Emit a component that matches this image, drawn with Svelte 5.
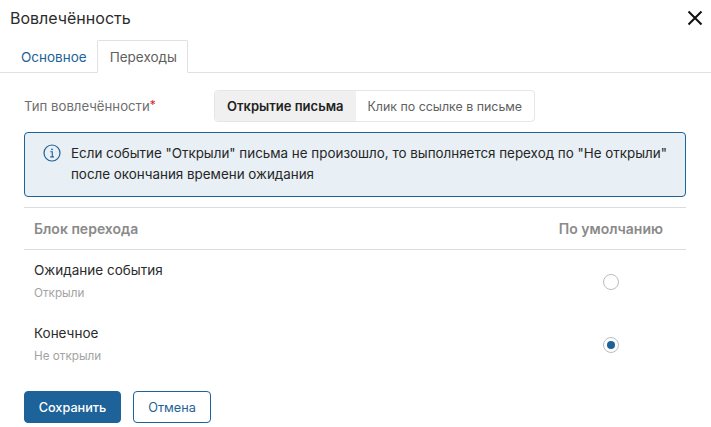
<script>
  const rows = [
    { title: "Ожидание события", sub: "Открыли", checked: false },
    { title: "Конечное", sub: "Не открыли", checked: true },
  ];
</script>

<div class="modal">
  <header>
    <h1>Вовлечённость</h1>
    <button class="close" aria-label="Закрыть">
      <svg width="16" height="16" viewBox="0 0 16 16"><path d="M1.5 1.5l13 13M14.5 1.5l-13 13" stroke="#111" stroke-width="2" fill="none" /></svg>
    </button>
  </header>

  <nav class="tabs">
    <span class="tab">Основное</span>
    <span class="tab active">Переходы</span>
  </nav>

  <div class="body">
    <div class="field">
      <span class="label">Тип вовлечённости<i>*</i></span>
      <div class="segment">
        <span class="seg on">Открытие письма</span>
        <span class="seg">Клик по ссылке в письме</span>
      </div>
    </div>

    <div class="alert">
      <svg width="18" height="18" viewBox="0 0 18 18" fill="none">
        <circle cx="9" cy="9" r="8" stroke="#1d6298" stroke-width="1.2" />
        <path d="M7.3 7.8H9.3V12.8M7.2 12.9H11" stroke="#1d6298" stroke-width="1.1" />
        <circle cx="9" cy="5.3" r="0.9" fill="#1d6298" />
      </svg>
      <p>Если событие "Открыли" письма не произошло, то выполняется переход по "Не открыли" после окончания времени ожидания</p>
    </div>

    <div class="thead">
      <span>Блок перехода</span>
      <span>По умолчанию</span>
    </div>

    {#each rows as row}
      <div class="row">
        <div class="text">
          <div class="title">{row.title}</div>
          <div class="sub">{row.sub}</div>
        </div>
        <span class="radio" class:checked={row.checked}></span>
      </div>
    {/each}

    <div class="actions">
      <button class="btn primary">Сохранить</button>
      <button class="btn ghost">Отмена</button>
    </div>
  </div>
</div>

<style>
  :global(body) {
    background: #fff;
  }
  * {
    box-sizing: border-box;
  }
  .modal {
    width: 711px;
    height: 427px;
    overflow: hidden;
    font-family: Inter, "Noto Sans", sans-serif;
    font-size: 13.5px;
    color: #2b2b2b;
  }
  header {
    height: 40px;
    display: flex;
    align-items: center;
    justify-content: space-between;
    padding: 0 8px 4px 10px;
  }
  h1 {
    margin: 0;
    font-size: 16px;
    font-weight: 400;
  }
  .close {
    display: flex;
    padding: 0;
    border: 0;
    background: none;
  }
  .tabs {
    height: 33px;
    display: flex;
    padding-left: 10px;
    border-bottom: 1px solid #e1e1e1;
  }
  .tab {
    height: 33px;
    padding: 0 9px 0 10px;
    display: flex;
    align-items: center;
    color: #1d6298;
    border: 1px solid transparent;
  }
  .active {
    padding: 0 10px 0 12px;
    color: #5f5f5f;
    background: #fff;
    border-color: #e1e1e1;
    border-bottom-color: #fff;
    border-radius: 2px 2px 0 0;
  }
  .body {
    padding: 17px 25px 0 24px;
  }
  .field {
    display: flex;
    align-items: center;
    height: 32px;
  }
  .label {
    width: 190px;
    color: #6f6f6f;
    font-size: 13.2px;
  }
  .label i {
    color: #d8232a;
    font-style: normal;
    font-size: 12px;
    line-height: 0;
    vertical-align: 2px;
  }
  .segment {
    display: flex;
    height: 32px;
    border: 1px solid #e6e6e6;
    border-radius: 4px;
    overflow: hidden;
    font-size: 12.4px;
  }
  .seg {
    display: flex;
    align-items: center;
    padding: 0 12px;
    color: #5f5f5f;
  }
  .on {
    font-size: 13px;
    background: #f0f0f0;
    color: #222;
    font-weight: 600;
  }
  .alert {
    margin-top: 10px;
    height: 65px;
    display: flex;
    gap: 10px;
    padding: 10px 10px 10px 18px;
    background: #e8eff5;
    border: 1px solid #1d6298;
    border-radius: 4px;
  }
  .alert svg {
    flex: none;
    margin-top: 1px;
  }
  .alert p {
    margin: 0;
    font-size: 13.4px;
    line-height: 21px;
    color: #262626;
  }
  .thead {
    margin-top: 10px;
    height: 43px;
    display: flex;
    align-items: center;
    justify-content: space-between;
    padding: 0 23px 0 10px;
    border-top: 1px solid #dcdcdc;
    border-bottom: 1px solid #dcdcdc;
    color: #8a8a8a;
    font-weight: 600;
    font-size: 14px;
  }
  .row {
    height: 63px;
    display: flex;
    align-items: center;
    justify-content: space-between;
    padding: 0 67px 0 10px;
  }
  .text {
    padding-bottom: 2px;
  }
  .title {
    line-height: 20px;
  }
  .sub {
    margin-top: 5px;
    font-size: 11.7px;
    line-height: 16px;
    color: #a3a3a3;
  }
  .radio {
    width: 16px;
    height: 16px;
    border-radius: 50%;
    border: 1px solid #bdbdbd;
    display: flex;
    align-items: center;
    justify-content: center;
  }
  .checked::after {
    content: "";
    width: 8px;
    height: 8px;
    border-radius: 50%;
    background: #1d6298;
  }
  .actions {
    margin-top: 15px;
    display: flex;
    gap: 12px;
  }
  .btn {
    height: 32px;
    border: 1px solid #1d6298;
    border-radius: 4px;
    background: #fff;
    color: #1d6298;
    font: inherit;
    font-size: 12.7px;
  }
  .primary {
    width: 97px;
    background: #1d6298;
    color: #fff;
    font-weight: 500;
  }
  .ghost {
    width: 78px;
  }
</style>
